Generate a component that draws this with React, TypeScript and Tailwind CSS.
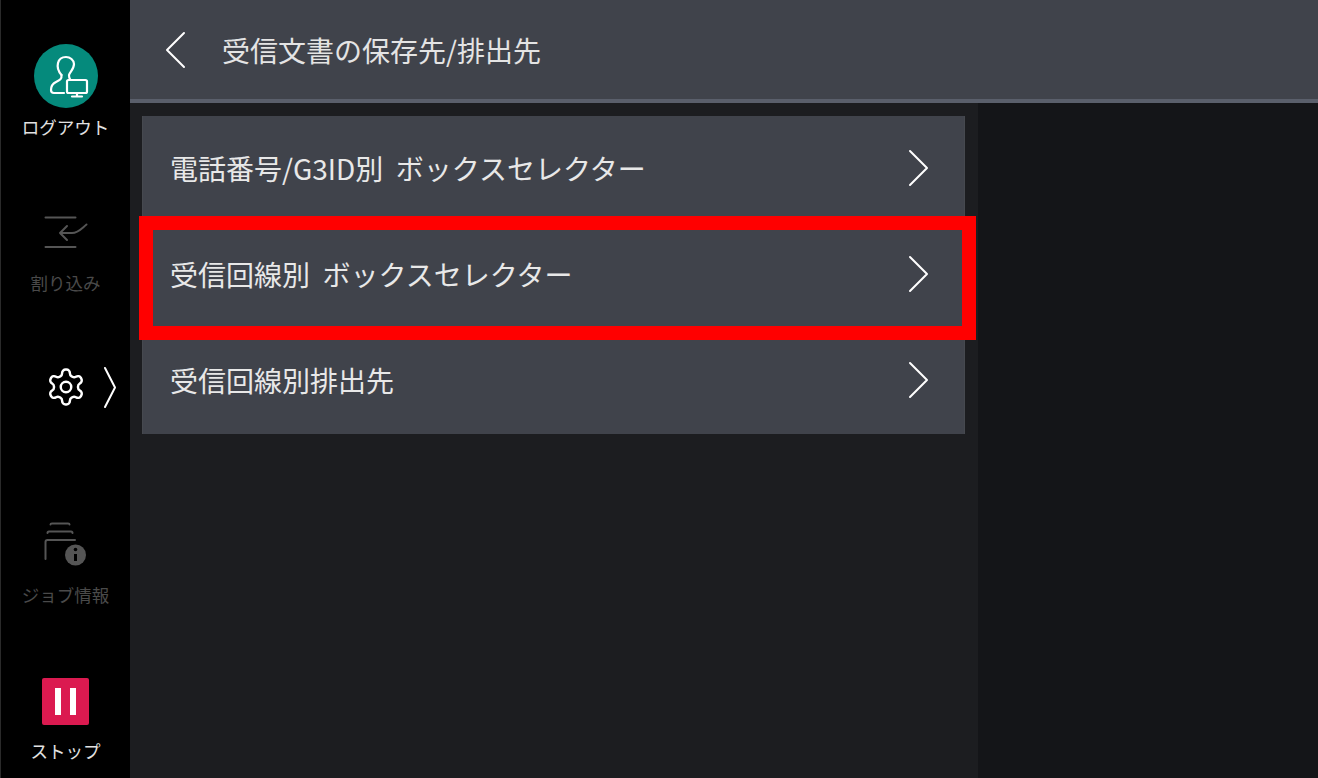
const Chevron = ({ className, box = "0 0 21 38", d = "M2 2 L19 19 L2 36" }: { className: string; box?: string; d?: string }) => (
  <svg viewBox={box} fill="none" stroke="currentColor" strokeWidth="2" strokeLinecap="round" strokeLinejoin="round" className={className}>
    <path d={d} />
  </svg>
);

const LogoutIcon = () => (
  <svg viewBox="0 0 64 64" fill="none" stroke="white" strokeWidth="2.2" strokeLinecap="round" strokeLinejoin="round" className="w-16 h-16">
    <path d="M27.5 31 C24 27 23 23 24 19 C25 15 28 13 32 13 C36 13 40 16 40 20 C40 25 36 28 35 31 C35 33 35 34 36 35" />
    <path d="M27.5 31 C28 35 26 36 22 38 C18 40 17 43 17 46 C17 48 18 49 20 49 L30 49" />
    <rect x="33" y="36" width="20" height="13" rx="1.5" />
    <path d="M43 49 V52 M38 52.5 H48" />
  </svg>
);

const InterruptIcon = () => (
  <svg viewBox="0 0 44 40" fill="none" stroke="#555" strokeWidth="2" strokeLinecap="round" strokeLinejoin="round" className="w-[44px] h-[40px]">
    <path d="M1.5 4.5 H31.5 M1.5 34 H31.5" />
    <path d="M42.5 11.5 C37 16 34 20 28 20 H16 M23 13 L16 20 L23 27" />
  </svg>
);

const GearIcon = () => (
  <svg viewBox="0 0 24 24" fill="none" stroke="white" strokeWidth="1.4" strokeLinecap="round" strokeLinejoin="round" className="w-[42px] h-[42px]">
    <path d="M12.22 2h-.44a2 2 0 0 0-2 2v.18a2 2 0 0 1-1 1.73l-.43.25a2 2 0 0 1-2 0l-.15-.08a2 2 0 0 0-2.73.73l-.22.38a2 2 0 0 0 .73 2.73l.15.1a2 2 0 0 1 1 1.72v.51a2 2 0 0 1-1 1.74l-.15.09a2 2 0 0 0-.73 2.73l.22.38a2 2 0 0 0 2.73.73l.15-.08a2 2 0 0 1 2 0l.43.25a2 2 0 0 1 1 1.73V20a2 2 0 0 0 2 2h.44a2 2 0 0 0 2-2v-.18a2 2 0 0 1 1-1.73l.43-.25a2 2 0 0 1 2 0l.15.08a2 2 0 0 0 2.73-.73l.22-.39a2 2 0 0 0-.73-2.73l-.15-.08a2 2 0 0 1-1-1.74v-.5a2 2 0 0 1 1-1.74l.15-.09a2 2 0 0 0 .73-2.73l-.22-.38a2 2 0 0 0-2.73-.73l-.15.08a2 2 0 0 1-2 0l-.43-.25a2 2 0 0 1-1-1.73V4a2 2 0 0 0-2-2z" />
    <circle cx="12" cy="12" r="3" />
  </svg>
);

const JobIcon = () => (
  <svg viewBox="0 0 44 44" fill="none" stroke="#555" strokeWidth="2" strokeLinecap="round" strokeLinejoin="round" className="w-[44px] h-[44px]">
    <path d="M6.5 2.5 Q6.5 1.5 8 1.5 H24 Q25.5 1.5 25.5 2.5 M3.5 11 Q3.5 9.5 5 9.5 H27 Q28.5 9.5 28.5 11 M1.5 37 V20 Q1.5 18 3.5 18 H31" />
    <circle cx="31.5" cy="33" r="10.5" fill="#555" stroke="none" />
    <circle cx="31.5" cy="27.5" r="1.8" fill="#000" stroke="none" />
    <path d="M31.5 32 V39" stroke="#000" strokeWidth="3" strokeLinecap="butt" />
  </svg>
);

const rows = ["電話番号/G3ID別 ボックスセレクター", "受信回線別 ボックスセレクター", "受信回線別排出先"];

const App = () => {
  return (
    <div className="relative flex w-[1318px] h-[778px] overflow-hidden bg-[#1c1d20] font-['Noto_Sans_CJK_JP','Noto_Sans',sans-serif]">
      <aside className="w-[130px] shrink-0 h-full bg-black border-l border-[#2a2a2a] flex flex-col items-center text-[17.5px] leading-none">
        <div className="mt-[44px] w-16 h-16 rounded-full bg-[#058a7c]">
          <LogoutIcon />
        </div>
        <span className="mt-[10px] text-[#e2e2e2]">ログアウト</span>
        <div className="mt-[77px]">
          <InterruptIcon />
        </div>
        <span className="mt-[21px] text-[#4a4a4a]">割り込み</span>
        <div className="mt-[74px] self-start ml-[44px] flex items-center gap-[16px] h-[44px]">
          <GearIcon />
          <Chevron className="w-[14px] h-[43px] text-white" box="0 0 14 43" d="M2 2 L12 21.5 L2 41" />
        </div>
        <div className="mt-[113px]">
          <JobIcon />
        </div>
        <span className="mt-[20px] text-[#4a4a4a]">ジョブ情報</span>
        <div className="mt-[74px] w-[47px] h-[47px] rounded-[2px] bg-[#db1a50] flex items-center justify-center gap-[9px]">
          <span className="w-[6px] h-[27px] bg-white" />
          <span className="w-[6px] h-[27px] bg-white" />
        </div>
        <span className="mt-[17px] text-[#e2e2e2]">ストップ</span>
      </aside>

      <div className="flex-1 flex flex-col">
        <header className="h-[103px] shrink-0 bg-[#40434b] border-b-4 border-[#5a5f6b] flex items-center">
          <Chevron className="ml-[35px] w-[21px] h-[38px] text-white" d="M19 2 L2 19 L19 36" />
          <h1 className="ml-[36px] text-[28px] leading-none font-normal text-[#e4e4e4]">受信文書の保存先/排出先</h1>
        </header>
        <div className="flex-1 flex">
          <main className="w-[848px] pl-3 pr-[13px] pt-[13px]">
            <div className="border-x border-[#46494f] flex flex-col">
              {rows.map((row) => (
                <div key={row} className="h-[106px] pb-[2px] bg-[#40434b] flex items-center justify-between pl-[27px] pr-[35px]">
                  <span className="text-[28px] leading-none text-[#e8e8e8] whitespace-pre">{row.replace(" ", "  ")}</span>
                  <Chevron className="w-[21px] h-[38px] text-white" />
                </div>
              ))}
            </div>
          </main>
          <div className="flex-1 bg-[#141518]" />
        </div>
      </div>

      <div className="absolute left-[139px] top-[216px] w-[837px] h-[124px] border-[14px] border-[#ff0000]" />
    </div>
  );
};

export default App;
